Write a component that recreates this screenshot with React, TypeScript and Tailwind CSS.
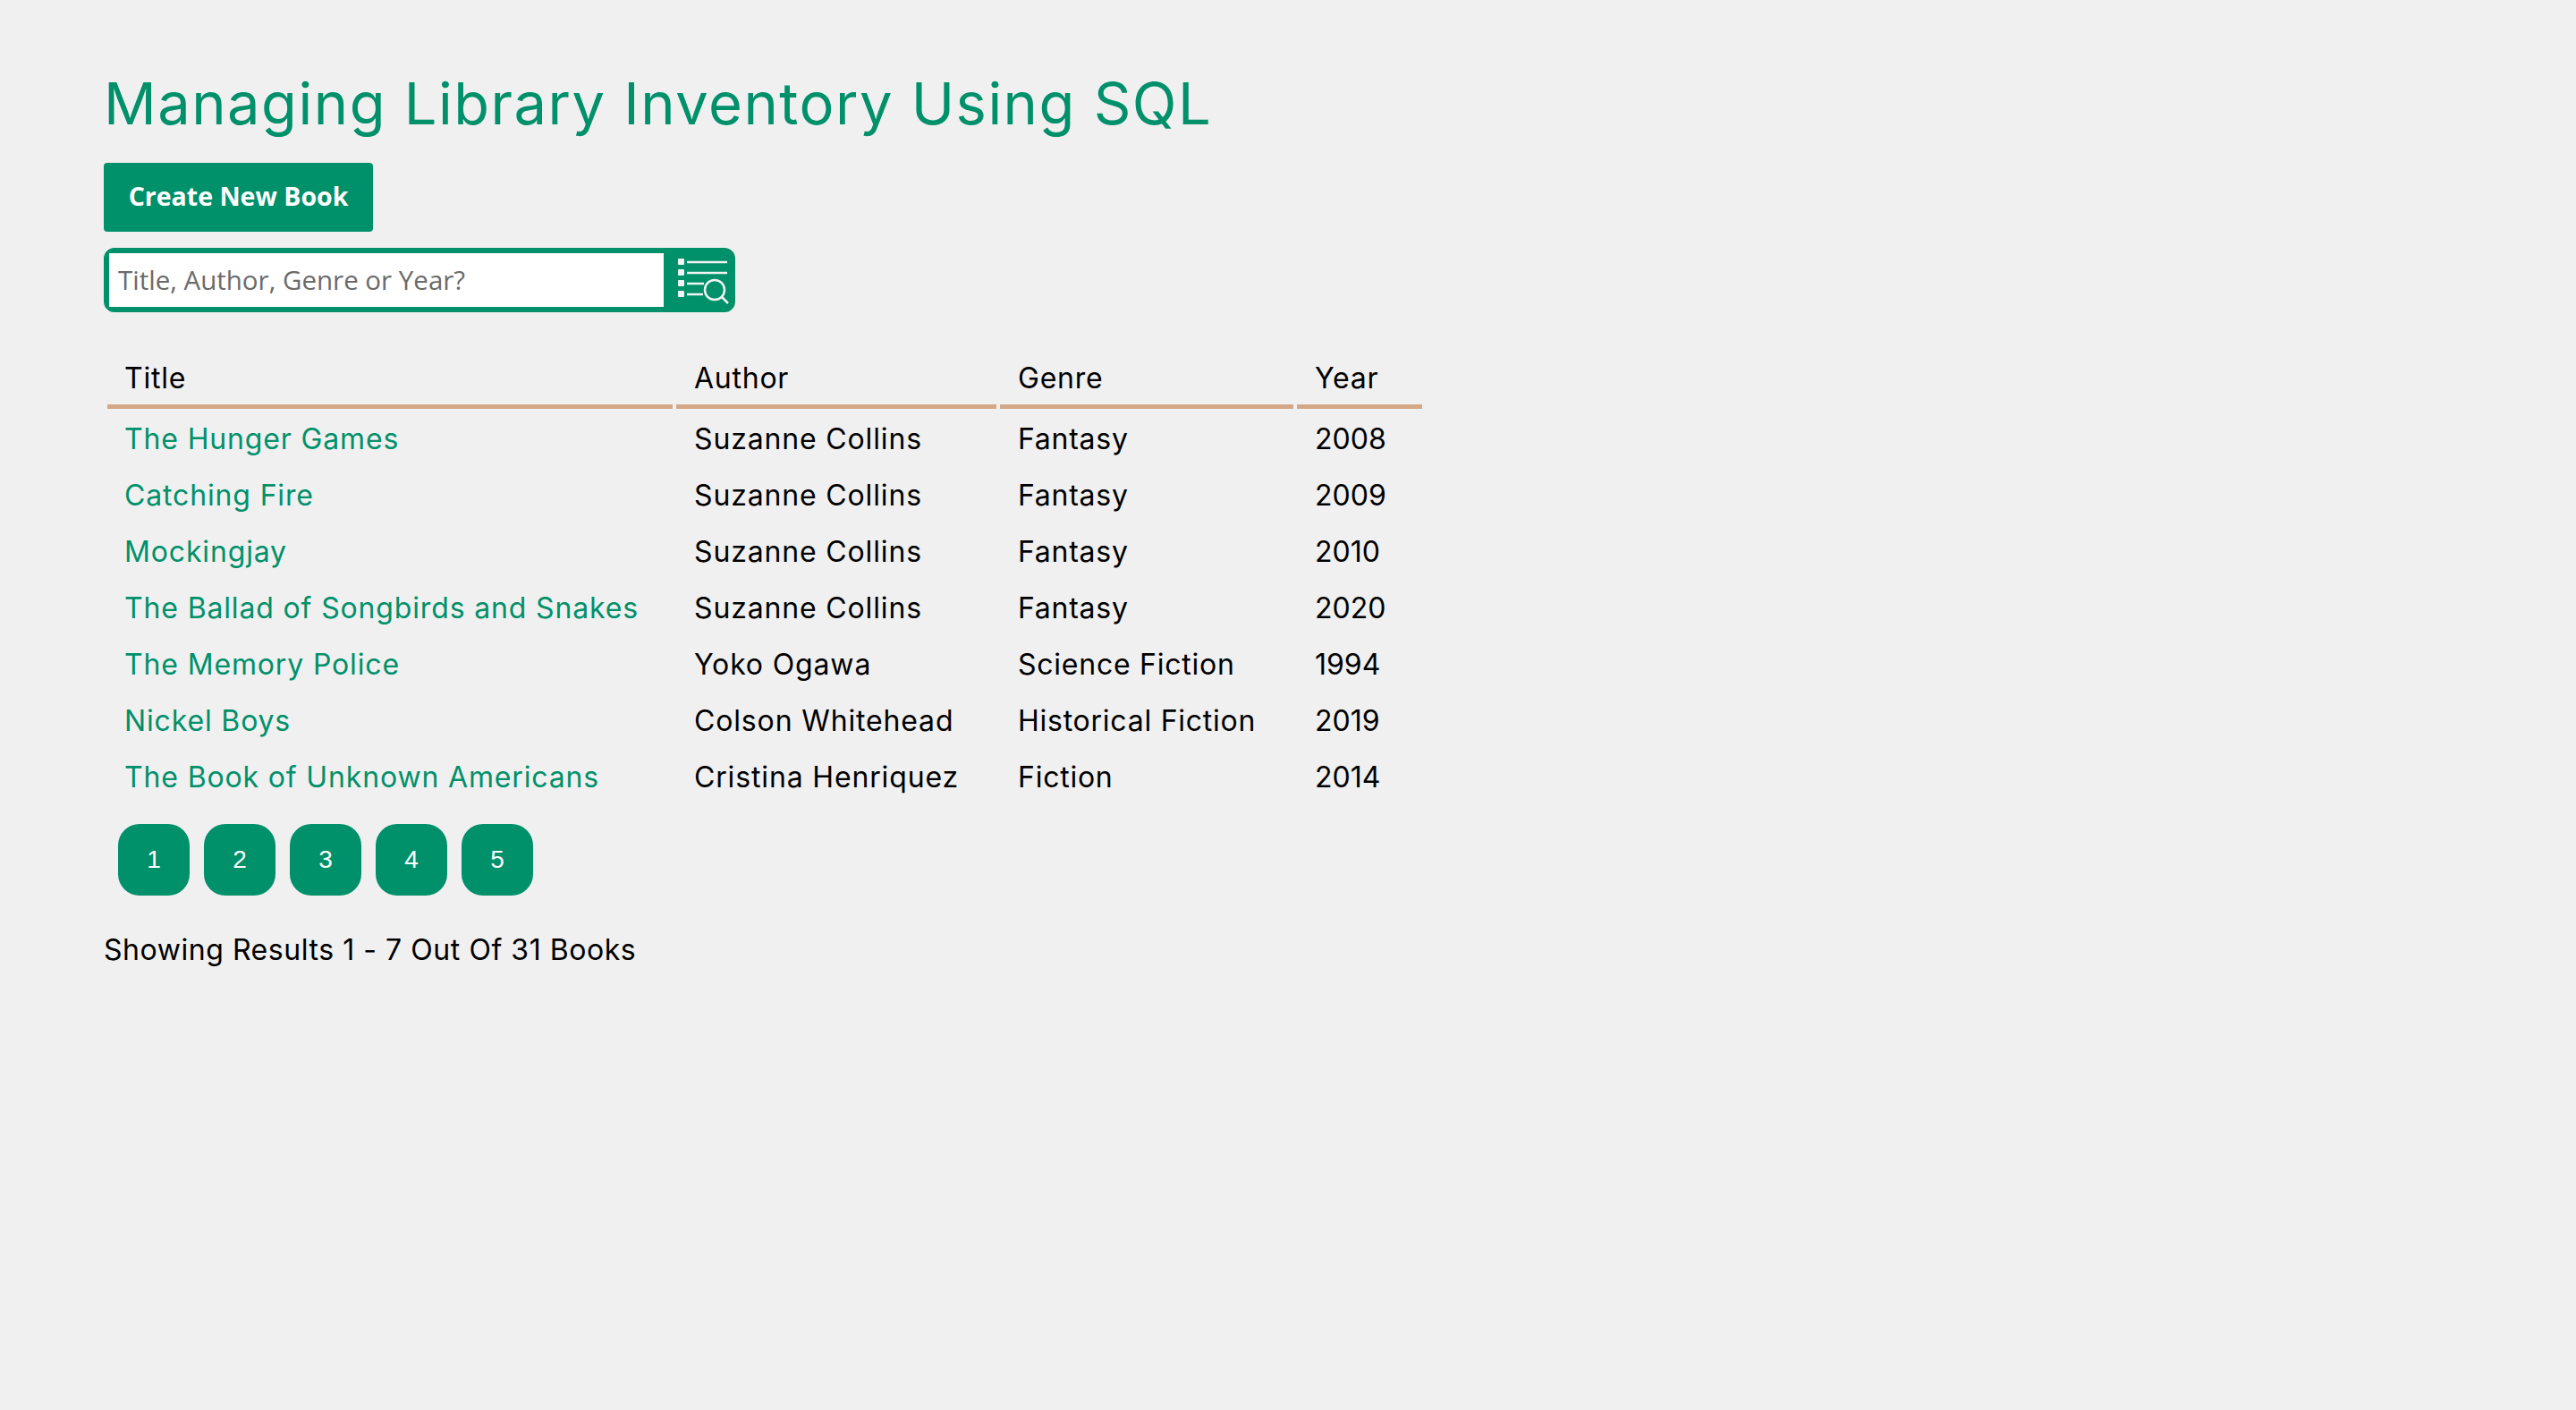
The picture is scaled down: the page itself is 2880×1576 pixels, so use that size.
const books = [
  { title: 'The Hunger Games', author: 'Suzanne Collins', genre: 'Fantasy', year: 2008 },
  { title: 'Catching Fire', author: 'Suzanne Collins', genre: 'Fantasy', year: 2009 },
  { title: 'Mockingjay', author: 'Suzanne Collins', genre: 'Fantasy', year: 2010 },
  { title: 'The Ballad of Songbirds and Snakes', author: 'Suzanne Collins', genre: 'Fantasy', year: 2020 },
  { title: 'The Memory Police', author: 'Yoko Ogawa', genre: 'Science Fiction', year: 1994 },
  { title: 'Nickel Boys', author: 'Colson Whitehead', genre: 'Historical Fiction', year: 2019 },
  { title: 'The Book of Unknown Americans', author: 'Cristina Henriquez', genre: 'Fiction', year: 2014 },
]

function SearchListIcon() {
  return (
    <svg className="shrink-0" width="74" height="60" viewBox="0 0 74 60" fill="none" stroke="#f4f4f4" strokeWidth="2.5">
      <g fill="#f4f4f4" stroke="none">
        <rect x="16" y="6" width="7" height="7" rx="1" />
        <rect x="16" y="18" width="7" height="7" rx="1" />
        <rect x="16" y="30" width="7" height="7" rx="1" />
        <rect x="16" y="42" width="7" height="7" rx="1" />
      </g>
      <path d="M26 10H71M26 22H71M26 34H45M26 46H44" />
      <circle cx="57" cy="41" r="11" />
      <path d="M65 49L72 56" />
    </svg>
  )
}

export default function App() {
  return (
    <div className="min-h-screen bg-[#f0f0f0] px-[116px] font-['Inter',sans-serif] text-black">
      <h1 className="pt-[76px] text-[65px] leading-[80px] font-normal tracking-[1.5px] text-[#00906a]">
        Managing Library Inventory Using SQL
      </h1>

      <button className="mt-[26px] block h-[77px] w-[301px] rounded-[4px] bg-[#00906a] pb-[2px] font-['Open_Sans',sans-serif] text-[28.5px] font-bold text-white">
        Create New Book
      </button>

      <div className="mt-[18px] flex h-[72px] w-[706px] rounded-[12px] border-[6px] border-[#00906a] bg-[#00906a]">
        <input
          placeholder="Title, Author, Genre or Year?"
          className="h-full w-[620px] shrink-0 bg-white pb-[2px] pl-[10px] font-['Open_Sans',sans-serif] text-[29.5px] outline-none placeholder:text-[#6b6b6b]"
        />
        <SearchListIcon />
      </div>

      <table className="mt-[40px] border-separate border-spacing-[4px] text-[32px] tracking-[0.75px]">
        <thead>
          <tr>
            <th className="h-[64px] w-[632px] border-b-[5px] border-[#d4a786] pl-[19px] text-left font-normal">Title</th>
            <th className="w-[358px] border-b-[5px] border-[#d4a786] pl-[20px] text-left font-normal">Author</th>
            <th className="w-[328px] border-b-[5px] border-[#d4a786] pl-[20px] text-left font-normal">Genre</th>
            <th className="w-[140px] border-b-[5px] border-[#d4a786] pl-[20px] text-left font-normal">Year</th>
          </tr>
        </thead>
        <tbody>
          {books.map((book) => (
            <tr key={book.title} className="h-[59px]">
              <td className="pl-[19px] tracking-[0.85px] text-[#00906a]">{book.title}</td>
              <td className="pl-[20px] tracking-[0.85px]">{book.author}</td>
              <td className="pl-[20px]">{book.genre}</td>
              <td className="pl-[20px] tracking-normal">{book.year}</td>
            </tr>
          ))}
        </tbody>
      </table>

      <div className="mt-[19px] flex gap-[16px] pl-[16px]">
        {[1, 2, 3, 4, 5].map((page) => (
          <button
            key={page}
            className="h-[80px] w-[80px] rounded-[24px] bg-[#00906a] font-['Liberation_Sans',sans-serif] text-[28px] text-white"
          >
            {page}
          </button>
        ))}
      </div>

      <p className="mt-[41px] text-[32px] leading-[40px] tracking-[0.55px]">Showing Results 1 - 7 Out Of 31 Books</p>
    </div>
  )
}
